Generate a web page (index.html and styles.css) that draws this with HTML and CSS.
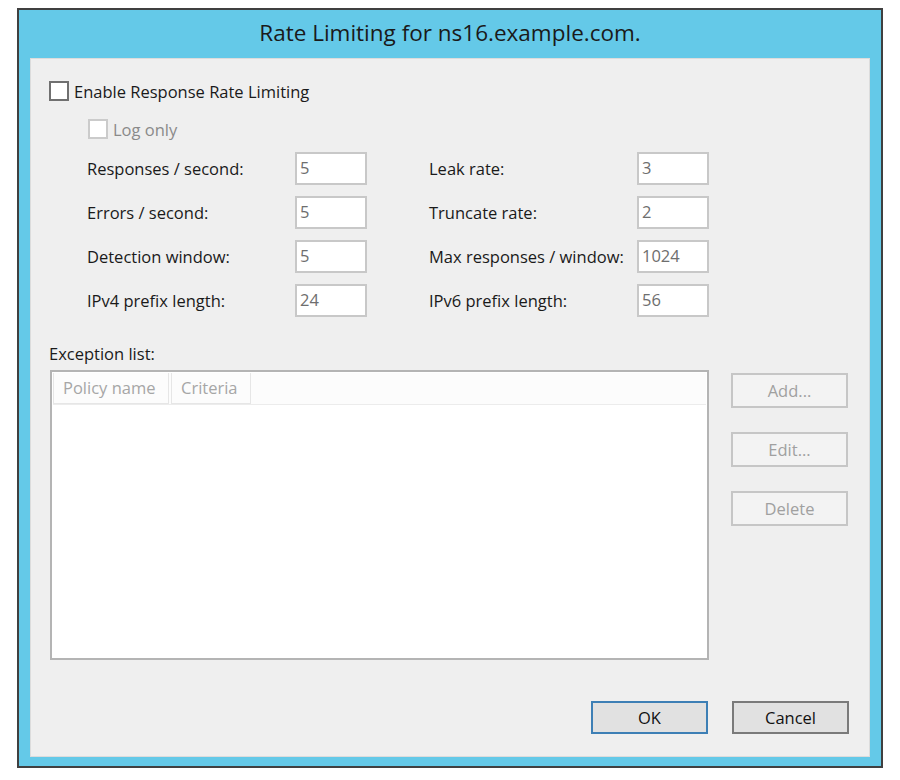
FILE: index.html
```html
<!DOCTYPE html>
<html>
<head>
<meta charset="utf-8">
<link rel="stylesheet" href="styles.css">
</head>
<body>
<div class="window">
  <div class="titlebar">Rate Limiting for ns16.example.com.</div>
  <div class="panel">
    <label class="chk-row">
      <span class="box"></span>
      <span class="chk-text">Enable Response Rate Limiting</span>
    </label>
    <label class="chk-row sub disabled">
      <span class="box"></span>
      <span class="chk-text">Log only</span>
    </label>
    <div class="fields">
      <span class="lbl">Responses / second:</span><span class="inp">5</span><span></span>
      <span class="lbl">Leak rate:</span><span class="inp">3</span>
      <span class="lbl">Errors / second:</span><span class="inp">5</span><span></span>
      <span class="lbl">Truncate rate:</span><span class="inp">2</span>
      <span class="lbl">Detection window:</span><span class="inp">5</span><span></span>
      <span class="lbl">Max responses / window:</span><span class="inp">1024</span>
      <span class="lbl">IPv4 prefix length:</span><span class="inp">24</span><span></span>
      <span class="lbl">IPv6 prefix length:</span><span class="inp">56</span>
    </div>
    <div class="exc-label">Exception list:</div>
    <div class="list-area">
      <div class="listbox">
        <div class="list-head">
          <span class="col col1">Policy name</span>
          <span class="col col2">Criteria</span>
        </div>
      </div>
      <div class="side-btns">
        <button class="btn dis">Add...</button>
        <button class="btn dis">Edit...</button>
        <button class="btn dis">Delete</button>
      </div>
    </div>
    <div class="footer">
      <button class="btn ok">OK</button>
      <button class="btn cancel">Cancel</button>
    </div>
  </div>
</div>
</body>
</html>
```

FILE: styles.css
```css
* { box-sizing: border-box; }
html, body { margin: 0; padding: 0; background: #ffffff; }
body {
  font-family: "Open Sans", "Noto Sans", "Liberation Sans", sans-serif;
  font-size: 16.5px;
  color: #1a1a1a;
}
.window {
  margin: 8px 0 0 17px;
  width: 866px;
  height: 760px;
  border: 2px solid #404040;
  background: #64c9e8;
  display: flex;
  flex-direction: column;
}
.titlebar {
  height: 48px;
  line-height: 46px;
  text-align: center;
  font-size: 22.5px;
  color: #1a1a1a;
}
.panel {
  margin: 0 11px 9px 11px;
  flex: 1;
  background: #efefef;
  border: 1px solid #dcdcdc;
  padding: 22px 20px 0 18px;
  display: flex;
  flex-direction: column;
}
.chk-row {
  display: flex;
  align-items: center;
  height: 20px;
}
.box {
  width: 20px;
  height: 20px;
  background: #fff;
  border: 2px solid #707070;
  margin-right: 5px;
}
.sub { margin: 18px 0 0 39px; }
.disabled .box { border-color: #cbcbcb; }
.disabled .chk-text { color: #8a8a8a; }
.fields {
  margin: 13px 0 0 38px;
  display: grid;
  grid-template-columns: 208px 72px 62px 208px 72px;
  grid-auto-rows: 33px;
  row-gap: 11px;
  align-items: center;
}
.lbl { white-space: nowrap; }
.inp {
  height: 33px;
  background: #fff;
  border: 2px solid #c8c8c8;
  color: #6e6e6e;
  padding: 3px 0 0 3px;
  line-height: 22px;
}
.exc-label {
  margin-top: 26px;
  line-height: 22px;
}
.list-area {
  display: flex;
  margin-top: 5px;
}
.listbox {
  margin-left: 1px;
  width: 659px;
  height: 290px;
  background: #fff;
  border: 2px solid #b4b4b4;
  padding: 1px;
}
.list-head {
  display: flex;
  height: 32px;
  border-bottom: 1px solid #ececec;
  background: #fcfcfc;
}
.col {
  border: 1px solid #e6e6e6;
  border-top: none;
  color: #a6a6a6;
  line-height: 30px;
  padding-left: 9px;
  margin-right: 2px;
  white-space: nowrap;
}
.col1 { width: 116px; }
.col2 { width: 80px; }
.side-btns {
  margin: 3px 0 0 22px;
  display: flex;
  flex-direction: column;
  gap: 24px;
}
.btn {
  font-family: inherit;
  font-size: 16.5px;
  width: 117px;
  height: 35px;
  padding: 0;
  border: 2px solid #c6c6c6;
  background: #f3f3f3;
  color: #a0a0a0;
}
.footer {
  margin-top: 41px;
  display: flex;
  justify-content: flex-end;
  gap: 24px;
}
.footer .btn { height: 33px; color: #111; background: #e1e1e1; }
.ok { border-color: #3d7fb5; }
.cancel { border-color: #7a7a7a; }
```
